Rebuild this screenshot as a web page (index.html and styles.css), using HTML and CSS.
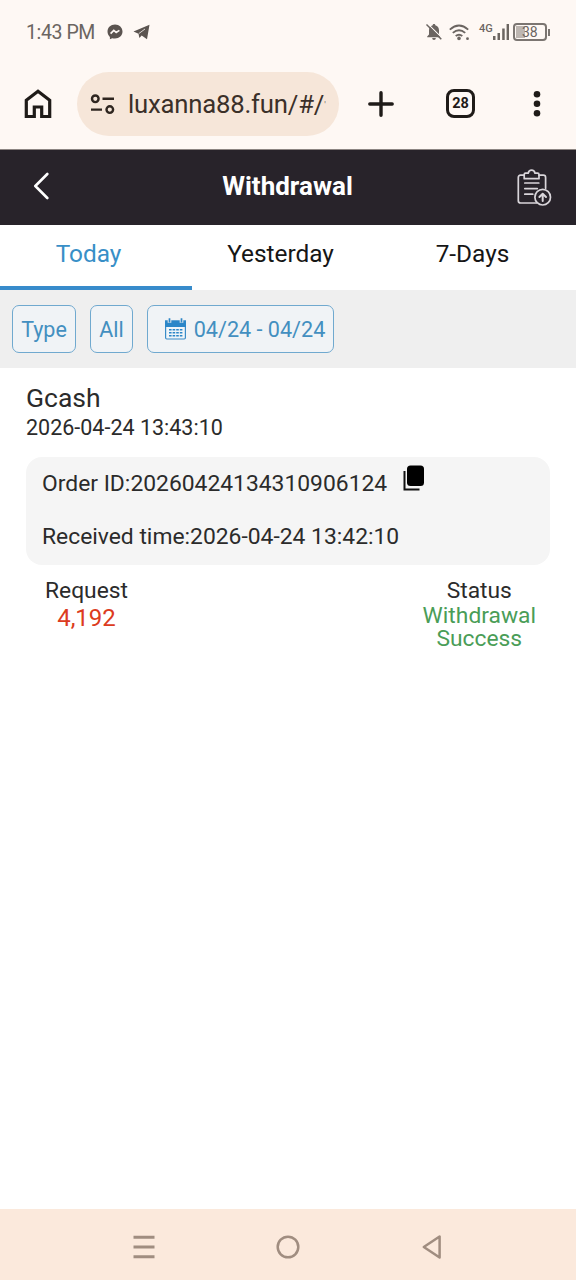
FILE: index.html
```html
<!DOCTYPE html>
<html lang="en">
<head>
<meta charset="utf-8">
<title>Withdrawal</title>
<link rel="stylesheet" href="styles.css">
</head>
<body>
<div class="phone">
  <div class="status">
    <span class="clock">1:43 PM</span>
    <svg class="messenger" width="16" height="16" viewBox="0 0 16 16"><path fill="#5b5450" d="M8 .5C3.700.5.5 3.600.5 7.600c0 2.200.9 4 2.400 5.300v2.400l2.300-1.100c.9.300 1.800.4 2.800.4 4.300 0 7.500-3.100 7.500-7S12.300.5 8 .5z"/><path d="M3.600 9.600l3.200-3.200 2.400 2 3.200-2" fill="none" stroke="#fef8f4" stroke-width="1.700"/></svg>
    <svg class="telegram" width="17" height="16" viewBox="0 0 17 16"><path fill="#5b5450" d="M.5 7.500L16.500.8 14 15.200 8.700 11.600 6.400 14 5.500 9.700z"/><path d="M5.800 9.600L12 5" stroke="#fef8f4" fill="none" stroke-width=".8"/></svg>
    <svg class="bell" width="18" height="18" viewBox="0 0 18 18"><path fill="#6b6561" d="M9 1c.8 0 1.300.5 1.300 1.300C12.600 3 14 4.900 14 7.300v4.200l1.800 2v.7H2.200v-.7l1.800-2V7.300C4 4.900 5.400 3 7.700 2.300 7.700 1.500 8.200 1 9 1zM7.200 15h3.600c0 1.200-.7 1.900-1.800 1.900S7.200 16.200 7.200 15z"/><path d="M2.800.8L17.200 15.200" stroke="#fef8f4" stroke-width="1.200"/><path d="M1.500 1.500L16.300 16.200" stroke="#6b6561" stroke-width="1.500"/></svg>
    <svg class="wifi" width="21" height="17" viewBox="0 0 21 17"><g fill="none" stroke="#6b6561" stroke-width="1.900"><path d="M.8 5.600Q10 -2.400 19.200 5.600M3.800 8.900Q10 3.500 16.200 8.900M6.700 12Q10 9.300 13.300 12"/></g><circle cx="10" cy="14.400" r="1.800" fill="#6b6561"/><circle cx="18.500" cy="14.700" r="1.400" fill="#6b6561"/></svg>
    <span class="net">4G</span>
    <svg class="bars" width="18" height="18" viewBox="0 0 18 18"><path fill="#6b6561" d="M1 13h2.500v4H1zM5.500 10H8v7H5.500zM10.200 5.500h2.500V17h-2.500zM14.600 1H17v16h-2.400z"/></svg>
    <span class="battery"><span class="level"></span><span class="pct">38</span></span>
    <span class="tip"></span>
  </div>
  <div class="browser">
    <svg class="home" width="28" height="30" viewBox="0 0 28 30"><path d="M2.300 27.500V11.200L14 2.200l11.700 9v16.300h-8V18h-7.400v9.500z" fill="none" stroke="#1f1b18" stroke-width="3.200"/></svg>
    <div class="url">
      <svg width="25" height="22" viewBox="0 0 25 22" fill="none" stroke="#2f2620" stroke-width="2.400"><circle cx="5.300" cy="5.800" r="3.300"/><path d="M12.500 5.800H24M1 16.600h11"/><circle cx="19.800" cy="16.600" r="3.300"/></svg>
      <span class="address">luxanna88.fun/#/<span class="dot">'</span></span>
    </div>
    <svg class="plus" width="26" height="26" viewBox="0 0 26 26"><path d="M13 1.800v22.400M1.800 13h22.400" stroke="#1f1b18" stroke-width="3.400" stroke-linecap="round"/></svg>
    <span class="count">28</span>
    <svg class="more" width="8" height="28" viewBox="0 0 8 28" fill="#1f1b18"><circle cx="4" cy="4.300" r="3.300"/><circle cx="4" cy="13.800" r="3.300"/><circle cx="4" cy="23.300" r="3.300"/></svg>
  </div>
  <div class="header">
    <svg class="back" width="16" height="28" viewBox="0 0 16 28"><path d="M14.300 2L2.300 14l12 12" fill="none" stroke="#fff" stroke-width="2.600" stroke-linecap="round" stroke-linejoin="round"/></svg>
    <h1 class="title">Withdrawal</h1>
    <svg class="history" width="35" height="38" viewBox="0 0 35 38" fill="none" stroke="#d9d5da" stroke-width="1.700" stroke-linecap="round" stroke-linejoin="round"><path d="M7 6.200H3.600Q1.300 6.200 1.300 8.500v23.200Q1.300 34 3.600 34h15.800M22 6.200h4.300q2.300 0 2.300 2.300v10.800"/><path d="M8.500 4.200h2.700c.4-1.900 1.800-3 3.400-3s3 1.100 3.400 3h2.700q1.300 0 1.300 1.300v4.200H7.200V5.500q0-1.300 1.300-1.300z"/><path d="M7.800 14h14M7.800 19.600h12.500M7.800 25.200h8"/><circle cx="25.700" cy="28.200" r="7.800"/><path d="M25.700 32v-7.200M22.400 28l3.300-3.300L29 28" stroke-width="2"/></svg>
  </div>
  <div class="tabs">
    <span class="tab active">Today</span>
    <span class="tab">Yesterday</span>
    <span class="tab">7-Days</span>
  </div>
  <div class="filters">
    <span class="chip type">Type</span>
    <span class="chip all">All</span>
    <span class="chip range">
      <svg width="23" height="22" viewBox="0 0 23 22"><path d="M1.600 3h19.800v16.800q0 1.200-1.200 1.200H2.800q-1.200 0-1.200-1.200z" fill="#f0f5f9" stroke="#3a8cc8" stroke-width="1.200"/><path d="M1 2.500h21V9H1z" fill="#2b86c8"/><path d="M5.500.8v4M17.500.8v4" stroke="#efefef" stroke-width="3.600"/><path d="M5.500.2v4.200M17.500.2v4.200" stroke="#2b86c8" stroke-width="1.700"/><path d="M5 11.800h13.500M5 14.800h13.500M5 17.800h13.500" stroke="#2b86c8" stroke-width="1.500" stroke-dasharray="2.600 1"/></svg>
      <span class="dates">04/24 - 04/24</span>
    </span>
  </div>
  <div class="record">
    <div class="method">Gcash</div>
    <div class="created">2026-04-24 13:43:10</div>
    <div class="details">
      <div class="line"><span class="order">Order ID:20260424134310906124</span><svg class="copy" width="22" height="27" viewBox="0 0 22 27"><path d="M1.500 6v18.600h15" fill="none" stroke="#111" stroke-width="2"/><rect x="4" y="0.500" width="17" height="20.500" rx="3.500" fill="#000"/></svg></div>
      <div class="line"><span class="received">Received time:2026-04-24 13:42:10</span></div>
    </div>
    <div class="summary">
      <div class="request"><div class="label">Request</div><div class="amount">4,192</div></div>
      <div class="state"><div class="label">Status</div><div class="result"><div>Withdrawal</div><div>Success</div></div></div>
    </div>
  </div>
  <div class="nav">
    <svg width="22" height="24" viewBox="0 0 22 24"><path d="M.5 2.300h21M.5 12h21M.5 21.700h21" stroke="#a08d80" stroke-width="3"/></svg>
    <svg width="24" height="24" viewBox="0 0 24 24"><circle cx="12" cy="12" r="10.300" fill="none" stroke="#a08d80" stroke-width="2.500"/></svg>
    <svg width="22" height="26" viewBox="0 0 22 26"><path d="M18.600 2.500v21L2.800 13z" fill="none" stroke="#a08d80" stroke-width="2.500" stroke-linejoin="round"/></svg>
  </div>
</div>
</body>
</html>
```
FILE: styles.css
```css
* { box-sizing: border-box; }
body { margin: 0; background: #fff; font-family: Roboto, "Liberation Sans", sans-serif; color: #2b2b2b; }
svg { display: block; flex: none; }
.phone { width: 576px; height: 1280px; display: flex; flex-direction: column; overflow: hidden; }
.status { height: 64px; padding-left: 26px; display: flex; align-items: center; background: #fef8f4; color: #6b6561; }
.clock { width: 81px; font-size: 19.500px; letter-spacing: -.4px; white-space: nowrap; padding-top: 1px; }
.telegram { margin-left: 10px; }
.bell { margin-left: 275px; }
.wifi { margin-left: 6px; }
.net { width: 13px; margin-left: 9px; margin-top: -7px; font-size: 11px; font-weight: 500; }
.bars { margin-left: 0; }
.battery { display: flex; align-items: center; position: relative; width: 34px; height: 18px; margin-left: 3px; border: 2px solid #7b7571; border-radius: 4px; }
.level { width: 9px; height: 12px; margin-left: 1px; background: #bdb6b1; }
.pct { position: absolute; left: 7px; top: -1px; font-size: 14px; line-height: 16px; }
.tip { width: 2px; height: 7px; margin-left: 1px; background: #7b7571; }
.browser { height: 86px; padding: 0 34px 6px 24px; display: flex; align-items: center; background: #fef8f4; border-bottom: 1px solid #8c8582; }
.url { width: 262px; height: 64px; margin-left: 25px; padding-left: 13px; display: flex; align-items: center; border-radius: 32px; background: #f6e6d9; }
.address { margin-left: 13px; white-space: nowrap; font-size: 25.700px; letter-spacing: -.2px; color: #3b3029; }
.dot { font-size: 9px; vertical-align: 5px; opacity: .7; }
.plus { margin-left: 29px; }
.count { width: 29px; height: 29px; margin-left: 52px; border: 3px solid #1f1b18; border-radius: 8px; color: #1f1b18; font-size: 14.500px; font-weight: 700; line-height: 24px; text-align: center; }
.more { margin-left: 58px; }
.header { height: 75px; padding: 0 24px 3px 33px; display: flex; align-items: center; background: #28232a; }
.title { flex: 1; margin: 0; padding-left: 9px; color: #fff; font-size: 26px; font-weight: 700; text-align: center; }
.history { margin-top: 3px; }
.tabs { height: 65px; display: flex; background: #fff; }
.tab { flex: 1; padding: 0 15px 5px 0; display: flex; align-items: center; justify-content: center; border-bottom: 4px solid transparent; font-size: 24.400px; color: #161616; }
.active { color: #388fc7; border-color: #378bcb; }
.filters { height: 78px; padding: 0 12px; display: flex; align-items: center; gap: 14px; background: #efefef; }
.chip { height: 48px; display: flex; align-items: center; justify-content: center; border: 1px solid #70a9cf; border-radius: 7px; background: #f0f3f6; color: #438fc0; font-size: 21.500px; white-space: nowrap; }
.type { width: 64px; }
.all { width: 43px; }
.range { width: 187px; gap: 7px; padding-left: 8px; }
.dates { font-size: 21.600px; }
.record { flex: 1; padding: 13px 26px 0; }
.method { height: 34px; font-size: 26.500px; line-height: 33px; }
.created { height: 26px; font-size: 21.500px; line-height: 26px; }
.details { height: 108px; margin-top: 16px; padding: 0 16px; border-radius: 16px; background: #f5f5f5; font-size: 22.850px; }
.line { display: flex; height: 53px; line-height: 53px; white-space: nowrap; }
.copy { margin: 8px 0 0 16px; }
.summary { display: flex; justify-content: space-between; padding: 12px 14px 0 19px; text-align: center; font-size: 22.800px; line-height: 27px; }
.amount { font-size: 24px; line-height: 29px; color: #dc3b20; }
.result { line-height: 23px; color: #4a9d57; }
.nav { height: 71px; padding: 5px 133px 0; display: flex; align-items: center; justify-content: space-between; background: #fbe9dc; }
```
